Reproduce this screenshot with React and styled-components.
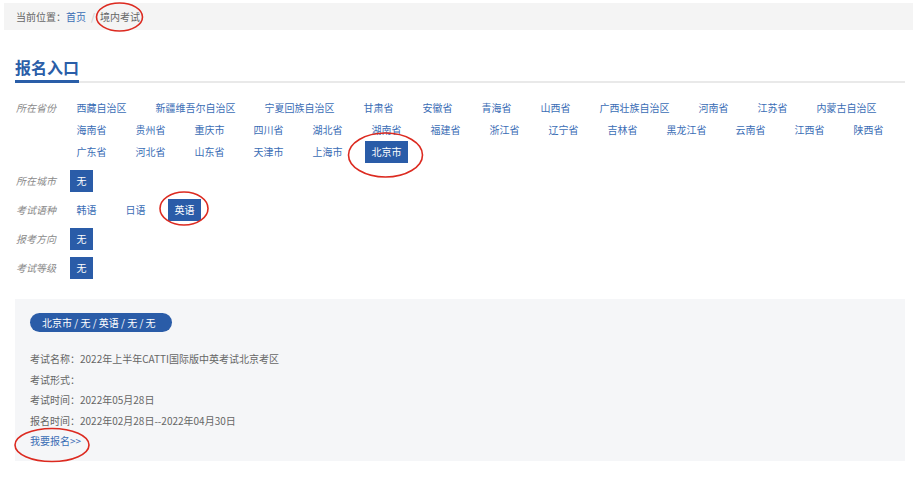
import styled, { createGlobalStyle } from 'styled-components';

const GlobalStyle = createGlobalStyle`
  body {
    margin: 0;
    background: #fff;
    font-family: "Noto Sans CJK SC", "Liberation Sans", sans-serif;
  }
`;

const Page = styled.div`
  position: relative;
  width: 924px;
  height: 482px;
  padding: 3px 11px 0 4px;
  box-sizing: border-box;
  overflow: hidden;
`;

const Crumbs = styled.div`
  height: 27px;
  line-height: 27px;
  background: #f4f4f4;
  padding-left: 12px;
  font-size: 10px;
  color: #666;
`;

const CrumbLink = styled.span`
  color: #3a6db5;
`;

const CrumbSep = styled.span`
  color: #c8c8c8;
  margin: 0 5px;
`;

const Main = styled.div`
  padding: 0 8px 0 11px;
`;

const TitleWrap = styled.div`
  margin-top: 25px;
  border-bottom: 2px solid #e9e9e9;
`;

const Title = styled.h2`
  display: inline-block;
  margin: 0 0 -2px;
  padding-bottom: 2px;
  font-size: 16px;
  line-height: 22px;
  font-weight: bold;
  color: #2a5ea8;
  border-bottom: 3px solid #2a5ea8;
`;

const Filters = styled.div`
  display: flex;
  flex-direction: column;
  gap: 7px;
  margin-top: 14px;
`;

const Group = styled.div`
  display: flex;
  align-items: flex-start;
  font-size: 10px;
  line-height: 22px;
`;

const Label = styled.div`
  flex: 0 0 55px;
  padding-left: 1px;
  box-sizing: border-box;
  color: #8a8a8a;
  font-style: italic;
`;

const Options = styled.div`
  flex: 1;
  display: flex;
  flex-wrap: wrap;
  column-gap: 16px;
`;

const Option = styled.span`
  height: 22px;
  padding: 0 6.5px;
  white-space: nowrap;
  color: ${p => (p.$active ? '#fff' : '#3a6db5')};
  background: ${p => (p.$active ? '#2a5ca8' : 'transparent')};
`;

const Panel = styled.div`
  margin-top: 20px;
  background: #f5f6f8;
  padding: 14px 15px 9px;
`;

const Pill = styled.div`
  width: max-content;
  height: 19px;
  line-height: 19px;
  padding: 0 16px 0 12px;
  border-radius: 10px;
  background: #2a5ca8;
  color: #fff;
  font-size: 10px;
  white-space: pre;
`;

const Info = styled.div`
  margin-top: 17px;
  font-size: 10px;
  line-height: 20.5px;
  color: #666;
`;

const Apply = styled.div`
  color: #3a6db5;
`;

const Marks = styled.svg`
  position: absolute;
  left: 0;
  top: 0;
  pointer-events: none;
`;

const provinces = [
  '西藏自治区', '新疆维吾尔自治区', '宁夏回族自治区', '甘肃省', '安徽省', '青海省', '山西省',
  '广西壮族自治区', '河南省', '江苏省', '内蒙古自治区',
  '海南省', '贵州省', '重庆市', '四川省', '湖北省', '湖南省', '福建省', '浙江省', '辽宁省',
  '吉林省', '黑龙江省', '云南省', '江西省', '陕西省',
  '广东省', '河北省', '山东省', '天津市', '上海市', '北京市',
];

const groups = [
  { label: '所在省份', items: provinces, active: '北京市' },
  { label: '所在城市', items: ['无'], active: '无' },
  { label: '考试语种', items: ['韩语', '日语', '英语'], active: '英语' },
  { label: '报考方向', items: ['无'], active: '无' },
  { label: '考试等级', items: ['无'], active: '无' },
];

export default function App() {
  return (
    <Page>
      <GlobalStyle />
      <Crumbs>
        当前位置：<CrumbLink>首页</CrumbLink>
        <CrumbSep>/</CrumbSep>境内考试
      </Crumbs>
      <Main>
        <TitleWrap>
          <Title>报名入口</Title>
        </TitleWrap>
        <Filters>
          {groups.map(g => (
            <Group key={g.label}>
              <Label>{g.label}</Label>
              <Options>
                {g.items.map(item => (
                  <Option key={item} $active={item === g.active}>{item}</Option>
                ))}
              </Options>
            </Group>
          ))}
        </Filters>
        <Panel>
          <Pill>北京市 / 无 / 英语 / 无 / 无</Pill>
          <Info>
            <div>考试名称：2022年上半年CATTI国际版中英考试北京考区</div>
            <div>考试形式：</div>
            <div>考试时间：2022年05月28日</div>
            <div>报名时间：2022年02月28日--2022年04月30日</div>
            <Apply>我要报名&gt;&gt;</Apply>
          </Info>
        </Panel>
      </Main>
      <Marks width="924" height="482" viewBox="0 0 924 482">
        <g fill="none" stroke="#dc2a20" strokeWidth="1.6">
          <ellipse cx="119.5" cy="17" rx="23" ry="14" />
          <ellipse cx="385.5" cy="155" rx="37" ry="22" />
          <ellipse cx="184" cy="208.5" rx="24" ry="16.5" />
          <ellipse cx="52" cy="445" rx="37" ry="16.5" />
        </g>
      </Marks>
    </Page>
  );
}
